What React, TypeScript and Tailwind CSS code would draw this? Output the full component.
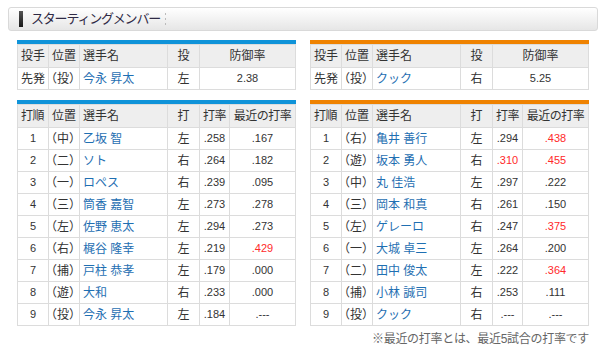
import clsx from 'clsx';

interface Pitcher {
  role: string;
  pos: string;
  name: string;
  hand: string;
  era: string;
}

interface Batter {
  order: number;
  pos: string;
  name: string;
  hand: string;
  avg: string;
  recent: string;
  avgHot?: boolean;
  recentHot?: boolean;
}

interface Team {
  bar: string;
  pitcher: Pitcher;
  lineup: Batter[];
}

const TEAMS: Team[] = [
  {
    bar: 'bg-[#0f93d9]',
    pitcher: { role: '先発', pos: '（投）', name: '今永 昇太', hand: '左', era: '2.38' },
    lineup: [
      { order: 1, pos: '（中）', name: '乙坂 智', hand: '左', avg: '.258', recent: '.167' },
      { order: 2, pos: '（二）', name: 'ソト', hand: '右', avg: '.264', recent: '.182' },
      { order: 3, pos: '（一）', name: 'ロペス', hand: '右', avg: '.239', recent: '.095' },
      { order: 4, pos: '（三）', name: '筒香 嘉智', hand: '左', avg: '.273', recent: '.278' },
      { order: 5, pos: '（左）', name: '佐野 恵太', hand: '左', avg: '.294', recent: '.273' },
      { order: 6, pos: '（右）', name: '梶谷 隆幸', hand: '左', avg: '.219', recent: '.429', recentHot: true },
      { order: 7, pos: '（捕）', name: '戸柱 恭孝', hand: '左', avg: '.179', recent: '.000' },
      { order: 8, pos: '（遊）', name: '大和', hand: '右', avg: '.233', recent: '.000' },
      { order: 9, pos: '（投）', name: '今永 昇太', hand: '左', avg: '.184', recent: '.---' },
    ],
  },
  {
    bar: 'bg-[#ef8200]',
    pitcher: { role: '先発', pos: '（投）', name: 'クック', hand: '右', era: '5.25' },
    lineup: [
      { order: 1, pos: '（右）', name: '亀井 善行', hand: '左', avg: '.294', recent: '.438', recentHot: true },
      { order: 2, pos: '（遊）', name: '坂本 勇人', hand: '右', avg: '.310', recent: '.455', avgHot: true, recentHot: true },
      { order: 3, pos: '（中）', name: '丸 佳浩', hand: '左', avg: '.297', recent: '.222' },
      { order: 4, pos: '（三）', name: '岡本 和真', hand: '右', avg: '.261', recent: '.150' },
      { order: 5, pos: '（左）', name: 'ゲレーロ', hand: '右', avg: '.247', recent: '.375', recentHot: true },
      { order: 6, pos: '（一）', name: '大城 卓三', hand: '左', avg: '.264', recent: '.200' },
      { order: 7, pos: '（二）', name: '田中 俊太', hand: '左', avg: '.222', recent: '.364', recentHot: true },
      { order: 8, pos: '（捕）', name: '小林 誠司', hand: '右', avg: '.253', recent: '.111' },
      { order: 9, pos: '（投）', name: 'クック', hand: '右', avg: '.---', recent: '.---' },
    ],
  },
];

const th = 'h-[23px] border border-[#dcdcdc] bg-[#eeeeee] font-normal px-[3px] leading-none whitespace-nowrap';
const td = 'h-[22px] border border-[#dcdcdc] bg-white px-[3px] leading-none whitespace-nowrap';
// position cell: half-width paren glyphs so "（中）" fits the 31px column
const posCell = "pl-[2px] pr-0 [font-feature-settings:'halt'] [text-spacing-trim:space-all]";

function PitcherTable({ team }: Readonly<{ team: Team }>) {
  const p = team.pitcher;
  return (
    <div>
      <div className={clsx('h-[4px]', team.bar)} />
      <table className="w-full table-fixed border-collapse text-[12px] text-[#333]">
        <colgroup>
          <col className="w-[31px]" />
          <col className="w-[31px]" />
          <col className="w-[88px]" />
          <col className="w-[32px]" />
          <col />
        </colgroup>
        <thead>
          <tr>
            <th className={clsx(th, 'text-left')}>投手</th>
            <th className={clsx(th, 'text-left')}>位置</th>
            <th className={clsx(th, 'text-left')}>選手名</th>
            <th className={clsx(th, 'text-center')}>投</th>
            <th className={clsx(th, 'text-center')}>防御率</th>
          </tr>
        </thead>
        <tbody>
          <tr>
            <td className={td}>{p.role}</td>
            <td className={clsx(td, posCell)}>{p.pos}</td>
            <td className={clsx(td, 'text-[#1f6fb2]')}>{p.name}</td>
            <td className={clsx(td, 'text-center')}>{p.hand}</td>
            <td className={clsx(td, 'text-center text-[11px]')}>{p.era}</td>
          </tr>
        </tbody>
      </table>
    </div>
  );
}

function LineupTable({ team }: Readonly<{ team: Team }>) {
  return (
    <div>
      <div className={clsx('h-[4px]', team.bar)} />
      <table className="w-full table-fixed border-collapse text-[12px] text-[#333]">
        <colgroup>
          <col className="w-[31px]" />
          <col className="w-[31px]" />
          <col className="w-[88px]" />
          <col className="w-[32px]" />
          <col className="w-[30px]" />
          <col />
        </colgroup>
        <thead>
          <tr>
            <th className={clsx(th, 'text-left px-[2px] tracking-[-0.5px]')}>打順</th>
            <th className={clsx(th, 'text-left')}>位置</th>
            <th className={clsx(th, 'text-left')}>選手名</th>
            <th className={clsx(th, 'text-center')}>打</th>
            <th className={clsx(th, 'text-center px-0 tracking-[-0.5px]')}>打率</th>
            <th className={clsx(th, 'text-center px-0 tracking-[-0.5px]')}>最近の打率</th>
          </tr>
        </thead>
        <tbody>
          {team.lineup.map((b) => (
            <tr key={b.order}>
              <td className={clsx(td, 'text-center text-[11px] h-[22.3px]')}>{b.order}</td>
              <td className={clsx(td, posCell)}>{b.pos}</td>
              <td className={clsx(td, 'text-[#1f6fb2]')}>{b.name}</td>
              <td className={clsx(td, 'text-center')}>{b.hand}</td>
              <td className={clsx(td, 'text-center px-0 text-[11px]', b.avgHot && 'text-[#ff2a2a]')}>{b.avg}</td>
              <td className={clsx(td, 'text-center text-[11px]', b.recentHot && 'text-[#ff2a2a]')}>{b.recent}</td>
            </tr>
          ))}
        </tbody>
      </table>
    </div>
  );
}

export default function App() {
  return (
    <div className="w-[600px] h-[357px] bg-white pt-[7px] font-['Liberation_Sans','Noto_Sans_CJK_JP',sans-serif] overflow-hidden">
      <div className="ml-[8px] w-[590px] h-[24px] flex items-center rounded-[3px] border border-[#d9d9d9] bg-gradient-to-b from-white to-[#e6e6e6]">
        <div className="ml-[10px] w-[4px] h-[16px] bg-gradient-to-b from-[#555] to-[#1a1a1a]" />
        <span className="ml-[8px] text-[13px] tracking-[-1.2px] text-[#2f2a45]">スターティングメンバー</span>
        <div className="ml-[5px] flex flex-col gap-[3px]">
          <span className="w-[1px] h-[2px] bg-[#bbb]" />
          <span className="w-[1px] h-[2px] bg-[#bbb]" />
          <span className="w-[1px] h-[2px] bg-[#bbb]" />
        </div>
      </div>
      <div className="ml-[17px] w-[572px] mt-[9px] grid grid-cols-2 gap-x-[14px]">
        {TEAMS.map((t, i) => (
          <PitcherTable key={i} team={t} />
        ))}
      </div>
      <div className="ml-[17px] w-[572px] mt-[10px] grid grid-cols-2 gap-x-[14px]">
        {TEAMS.map((t, i) => (
          <LineupTable key={i} team={t} />
        ))}
      </div>
      <div className="ml-[17px] w-[572px] mt-[4px] text-right text-[12px] text-[#666] tracking-[-0.3px]">
        ※最近の打率とは、最近5試合の打率です
      </div>
    </div>
  );
}
